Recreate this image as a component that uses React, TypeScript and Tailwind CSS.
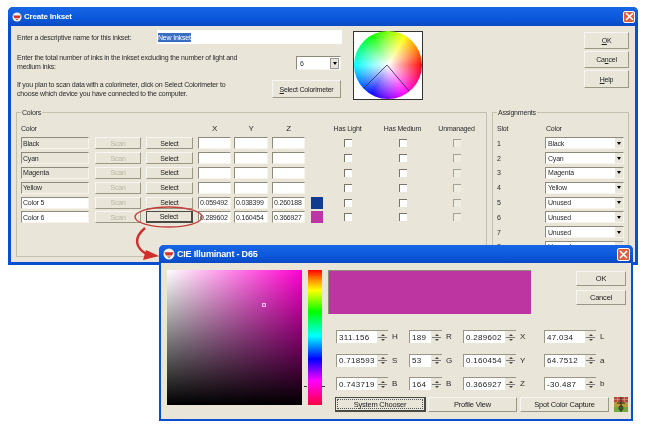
import type { ReactNode } from "react";

const Font = "[font-family:'Liberation_Sans',Arial,sans-serif]";

const colorRows = [
  { name: "Black", locked: true },
  { name: "Cyan", locked: true },
  { name: "Magenta", locked: true },
  { name: "Yellow", locked: true },
  { name: "Color 5", x: "0.059492", y: "0.038399", z: "0.260188", swatch: "bg-[#123a8f]" },
  { name: "Color 6", x: "0.289602", y: "0.160454", z: "0.366927", swatch: "bg-[#bd35a4]", focus: true },
];

const slots = ["Black", "Cyan", "Magenta", "Yellow", "Unused", "Unused", "Unused", "Unused"];

const spinRows = [
  [["311.156", "H"], ["189", "R"], ["0.289602", "X"], ["47.034", "L"]],
  [["0.718593", "S"], ["53", "G"], ["0.160454", "Y"], ["64.7512", "a"]],
  [["0.743719", "B"], ["164", "B"], ["0.366927", "Z"], ["-30.487", "b"]],
];

const spinWidths = ["w-[52px]", "w-[33px]", "w-[53px]", "w-[52px]"];
const spinGaps = ["mr-[12px]", "mr-[12px]", "mr-[19px]", ""];

const tableCols = "grid-cols-[74px_51px_52px_36px_38px_39px_12px_49px_61px_47px]";
const Sunken = "border border-t-[#8f8b7c] border-l-[#8f8b7c] border-r-[#f5f3ea] border-b-[#f5f3ea]";

function XpButton({ label, className = "", disabled = false, focus = false }: { label: ReactNode; className?: string; disabled?: boolean; focus?: boolean }) {
  const edge = focus
    ? "border border-[#4a4a42] border-r-2 border-b-2"
    : "border border-t-[#f7f6f0] border-l-[#f7f6f0] border-r-[#9a9785] border-b-[#9a9785]";
  return (
    <div className={`flex items-center justify-center bg-[#e9e5d8] ${edge} ${disabled ? "text-[#b9b6a6]" : "text-[#222]"} ${className}`}>
      {label}
    </div>
  );
}

function Check({ dim = false }: { dim?: boolean }) {
  return <div className={`mx-auto h-2 w-2 border-t border-l ${dim ? "border-[#a5a293] bg-[#efece2]" : "border-[#77746a] bg-white"}`} />;
}

function Logo({ size }: { size: number }) {
  return (
    <svg width={size} height={size} viewBox="0 0 12 12" className="shrink-0">
      <circle cx="6" cy="6" r="5.5" fill="#f4f1ec" />
      <path d="M1.5 4.2h9L9 7.6H3z" fill="#d3322b" />
      <path d="M4 8.4h4L6 10z" fill="#7c5a46" />
    </svg>
  );
}

function CloseBox({ className = "" }: { className?: string }) {
  return (
    <div className={`flex items-center justify-center rounded-[2px] border border-white bg-[#dd5f3e] ${className}`}>
      <svg width="9" height="9" viewBox="0 0 9 9">
        <path d="M1 1l7 7M8 1l-7 7" stroke="#fff" strokeWidth="1.6" />
      </svg>
    </div>
  );
}

function TitleBar({ title, big = false }: { title: string; big?: boolean }) {
  return (
    <div className={`flex items-center rounded-t-[5px] bg-[linear-gradient(180deg,#1766e4,#0c58dc_60%,#0a49c4)] pl-[4px] pr-[3px] font-bold text-white ${big ? "h-[18px] text-[9px]" : "h-[19px] text-[8px]"}`}>
      <Logo size={big ? 12 : 10} />
      <span className="ml-[2px]">{title}</span>
      <CloseBox className={`ml-auto ${big ? "h-[13px] w-[13px]" : "h-[12px] w-[12px]"}`} />
    </div>
  );
}

function ColorWheel() {
  return (
    <div className="relative ml-[4px] mt-px h-[69px] w-[70px] shrink-0 border border-[#333] bg-white">
      <div className="absolute -top-px left-0 h-[68px] w-[68px] rounded-full bg-[image:radial-gradient(circle,#ffffff_0%,#ffffff00_72%),conic-gradient(from_90deg,#ff0000,#ff00ff,#0000ff,#00ffff,#00ff00,#ffff00,#ff0000)]" />
      <svg className="absolute left-0 top-0" width="68" height="67" viewBox="0 0 68 67">
        <path d="M10 56L33 33L55 59" fill="none" stroke="#2a2a4a" strokeWidth="0.8" />
      </svg>
    </div>
  );
}

function Spin({ value, w }: { value: string; w: string }) {
  return (
    <div className={`flex h-[13px] items-center border-t border-l border-[#9a9686] bg-white pl-[2px] text-[8px] tracking-[0.3px] text-[#222] ${w}`}>
      <span>{value}</span>
      <div className="ml-auto flex h-full w-[11px] flex-col items-center justify-center gap-[1px] bg-[#e9e5d8]">
        <div className="h-0 w-0 border-x-[2px] border-b-[2px] border-x-transparent border-b-[#444]" />
        <div className="h-px w-[9px] bg-[#777]" />
        <div className="h-0 w-0 border-x-[2px] border-t-[2px] border-x-transparent border-t-[#444]" />
      </div>
    </div>
  );
}

export default function App() {
  return (
    <div className={`relative h-[429px] w-[646px] overflow-hidden bg-white text-[7px] leading-[9px] tracking-[-0.2px] text-[#2b2b2b] blur-[0.35px] ${Font}`}>
      {/* main window */}
      <div className="absolute left-[8px] top-[7px] h-[258px] w-[630px] rounded-t-[5px] border-x-[3px] border-b-[3px] border-[#0a4fd0] bg-[#e9e5d8]">
        <div className="-mx-[3px]"><TitleBar title="Create Inkset" /></div>
        <div className="px-[5px]">
          <div className="flex pt-[4px]">
            <div className="w-[333px] pl-px">
              <div className="flex h-[14px] items-center">
                <span className="w-[140px]">Enter a descriptive name for this inkset:</span>
                <div className="flex h-[14px] w-[185px] items-center bg-white pl-px">
                  <span className="bg-[#3a6ec2] text-white">New Inkset</span>
                </div>
              </div>
              <div className="mt-[9px] flex items-start">
                <p className="w-[240px]">Enter the total number of inks in the inkset excluding the number of light and medium inks:</p>
                <div className={`ml-[39px] mt-[3px] flex h-[14px] w-[45px] items-center bg-white pl-[3px] ${Sunken}`}>
                  6
                  <div className="ml-auto mr-px flex h-[11px] w-[9px] items-center justify-center border border-[#999] bg-[#e9e5d8]">
                    <div className="h-0 w-0 border-x-[2px] border-t-[3px] border-x-transparent border-t-black" />
                  </div>
                </div>
              </div>
              <div className="mt-[9px] flex items-start">
                <p className="w-[212px]">If you plan to scan data with a colorimeter, click on Select Colorimeter to choose which device you have connected to the computer.</p>
                <XpButton className="ml-[43px] h-[18px] w-[69px]" label={<span><u>S</u>elect Colorimeter</span>} />
              </div>
            </div>
            <ColorWheel />
            <div className="ml-auto mr-[1px] flex w-[45px] flex-col gap-[2px] pt-[2px]">
              <XpButton className="h-[17px]" label={<span><u>O</u>K</span>} />
              <XpButton className="h-[17px]" label={<span>Ca<u>n</u>cel</span>} />
              <XpButton className="h-[18px]" label={<span><u>H</u>elp</span>} />
            </div>
          </div>

          <div className="mt-[12px] flex gap-[5px]">
            {/* colors */}
            <div className="relative h-[145px] w-[471px] border border-[#c4c0ae] pl-[4px] pt-[11px]">
              <span className="absolute -top-[5px] left-[4px] bg-[#e9e5d8] px-[1px]">Colors</span>
              <div className={`grid items-center ${tableCols}`}>
                <div className="flex h-[9px] items-center">Color</div>
                <div />
                <div />
                <div className="w-[33px] text-center text-[8px]">X</div>
                <div className="w-[34px] text-center text-[8px]">Y</div>
                <div className="w-[33px] text-center text-[8px]">Z</div>
                <div />
                <div className="text-center">Has Light</div>
                <div className="text-center">Has Medium</div>
                <div className="text-center">Unmanaged</div>
              </div>
              <div className="mt-[3px] flex flex-col">
                {colorRows.map((r) => (
                  <div key={r.name} className={`grid h-[14.8px] items-center ${tableCols}`}>
                    <div className={`flex h-[12px] w-[68px] items-center pl-[1px] ${Sunken} ${r.locked ? "bg-[#e9e5d8]" : "bg-white"}`}>{r.name}</div>
                    <XpButton disabled className="h-[12px] w-[46px]" label="Scan" />
                    <XpButton focus={r.focus} className="h-[12px] w-[47px]" label="Select" />
                    <div className={`flex h-[12px] w-[33px] items-center overflow-hidden bg-white pl-[1px] ${Sunken}`}>{r.x}</div>
                    <div className={`flex h-[12px] w-[34px] items-center overflow-hidden bg-white pl-[1px] ${Sunken}`}>{r.y}</div>
                    <div className={`flex h-[12px] w-[33px] items-center overflow-hidden bg-white pl-[1px] ${Sunken}`}>{r.z}</div>
                    <div className={`h-[12px] ${r.swatch ?? ""}`} />
                    <Check />
                    <Check />
                    <Check dim />
                  </div>
                ))}
              </div>
            </div>

            {/* assignments */}
            <div className="relative h-[145px] w-[137px] border border-[#c4c0ae] pl-[4px] pt-[11px]">
              <span className="absolute -top-[5px] left-[4px] bg-[#e9e5d8] px-[1px]">Assignments</span>
              <div className="flex h-[9px] items-center">
                <span className="w-[49px]">Slot</span>
                <span>Color</span>
              </div>
              <div className="mt-[3px] flex flex-col">
                {slots.map((s, i) => (
                  <div key={i} className="flex h-[14.8px] items-center">
                    <span className="w-[48px]">{i + 1}</span>
                    <div className={`flex h-[12px] w-[79px] items-center bg-white pl-[2px] ${Sunken}`}>
                      {s}
                      <div className="ml-auto flex h-[10px] w-[8px] items-center justify-center bg-[#e9e5d8]">
                        <div className="h-0 w-0 border-x-[2px] border-t-[3px] border-x-transparent border-t-black" />
                      </div>
                    </div>
                  </div>
                ))}
              </div>
            </div>
          </div>
        </div>
      </div>

      {/* callout around the Select button */}
      <svg className="absolute left-[130px] top-[200px]" width="80" height="62" viewBox="0 0 80 62">
        <ellipse cx="38.5" cy="17" rx="33.5" ry="10" fill="none" stroke="#c4403c" strokeWidth="1.4" />
        <path d="M15 28C3 38 5 48 18 55" fill="none" stroke="#cf2e2a" strokeWidth="2.4" />
        <path d="M16 50L13 60L29 56z" fill="#cf2e2a" />
      </svg>

      {/* color picker dialog */}
      <div className="absolute left-[159px] top-[245px] h-[176px] w-[474px] rounded-t-[5px] border-x-2 border-b-2 border-[#0a4fd0] bg-[#e9e5d8]">
        <div className="-mx-[2px]"><TitleBar big title="CIE Illuminant - D65" /></div>
        <div className="flex px-[6px] pt-[7px]">
          <div className="relative h-[135px] w-[135px] shrink-0 bg-[image:linear-gradient(180deg,#00000000,#000000),linear-gradient(90deg,#ffffff,#ff00d0)]">
            <div className="absolute left-[95px] top-[33px] h-[4px] w-[4px] border border-[#f7b6ea] bg-[#c45ab0]" />
          </div>
          <div className="relative ml-[6px] h-[135px] w-[14px] shrink-0 bg-[linear-gradient(180deg,#ff0000,#ff9900_8%,#ffff00_15%,#00ff00_31%,#00ffff_49%,#0000ff_66%,#ff00ff_82%,#ff0040)]">
            <div className="absolute -left-[4px] top-[116px] h-px w-[3px] bg-[#333]" />
            <div className="absolute -right-[3px] top-[116px] h-px w-[3px] bg-[#333]" />
          </div>
          <div className="ml-[6px] flex-1">
            <div className="flex">
              <div className="h-[44px] w-[203px] border-t border-l border-[#8f8b7c] bg-[#bd35a0]" />
              <div className="ml-[45px] flex w-[50px] flex-col gap-[4px] pt-px text-[7.5px]">
                <XpButton className="h-[15px]" label="OK" />
                <XpButton className="h-[15px]" label="Cancel" />
              </div>
            </div>
            <div className="mt-[16px] flex flex-col gap-[10.5px] pl-[8px]">
              {spinRows.map((row, i) => (
                <div key={i} className="flex h-[13px] items-center">
                  {row.map(([v, l], j) => (
                    <div key={j} className={`flex items-center ${spinGaps[j]}`}>
                      <Spin value={v} w={spinWidths[j]} />
                      <span className="ml-[4px] w-[5px] text-[8px]">{l}</span>
                    </div>
                  ))}
                </div>
              ))}
            </div>
          </div>
        </div>
        <div className="absolute left-[174px] top-[152px] flex items-center gap-[2px] text-[7.5px]">
          <XpButton focus className="h-[15px] w-[91px] p-px" label={<span className="flex h-full w-full items-center justify-center border border-dotted border-[#555]">System Chooser</span>} />
          <XpButton className="h-[15px] w-[89px]" label="Profile View" />
          <XpButton className="ml-[1px] h-[15px] w-[89px]" label="Spot Color Capture" />
          <svg className="ml-[3px]" width="14" height="15" viewBox="0 0 14 15">
            <rect width="14" height="5" fill="#b4473c" />
            <rect y="5" width="14" height="5" fill="#b79a3a" />
            <rect y="10" width="14" height="5" fill="#74a83e" />
            <path d="M0 2.5h14M3.5 0v6M10.5 0v6" stroke="#e0a090" strokeWidth="0.6" />
            <path d="M7 0v15M3 6h8" stroke="#222" strokeWidth="1" />
            <circle cx="7" cy="11" r="2" fill="none" stroke="#222" />
          </svg>
        </div>
      </div>
    </div>
  );
}
